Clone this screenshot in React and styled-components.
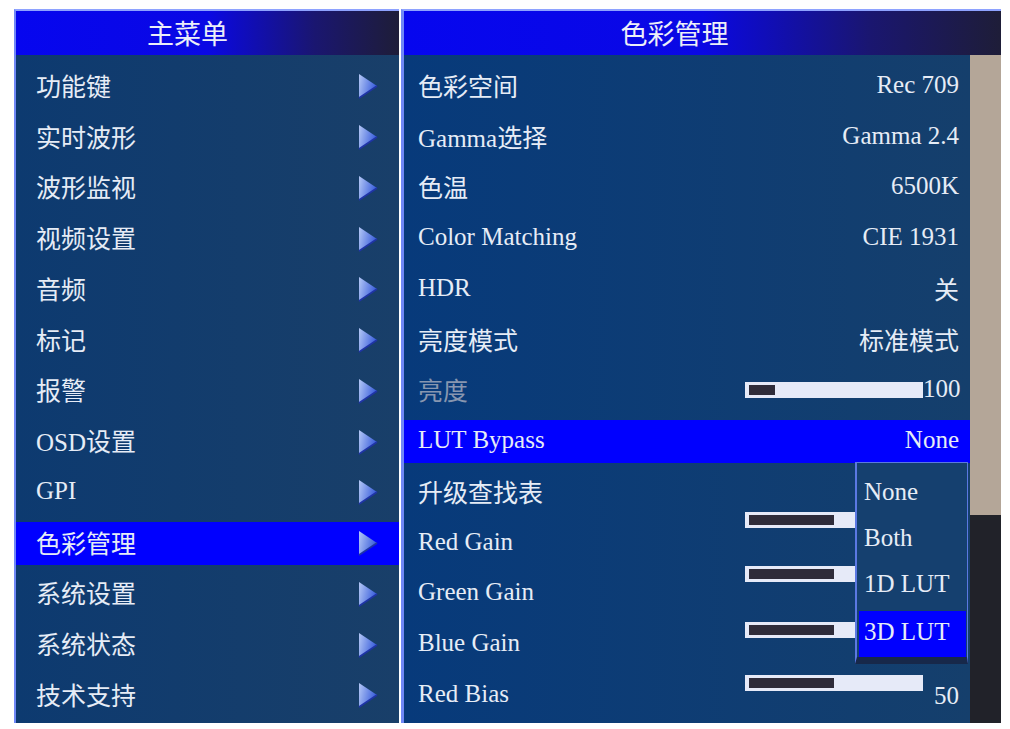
import React from 'react';
import styled, { createGlobalStyle } from 'styled-components';

const GlobalStyle = createGlobalStyle`
	body {
		margin: 0;
		background: #ffffff;
	}
`;

const FONT = `'Liberation Serif', 'Noto Sans CJK SC', serif`;

const Screen = styled.div`
	display: flex;
	align-items: flex-start;
	gap: 1px;
	padding: 9px 0 0 14px;
	width: 1010px;
	height: 729px;
	box-sizing: border-box;
	font-family: ${FONT};
	color: #e6ecf6;
`;

const Panel = styled.div`
	display: flex;
	flex-direction: column;
	width: ${props => props.$width}px;
	height: 714px;
	border-top: 2px solid #8ea2ff;
	border-left: ${props => props.$edge}px solid #7088f6;
	box-sizing: border-box;
	margin-left: ${props => props.$offset || 0}px;
`;

const Header = styled.div`
	height: 44px;
	flex: none;
	display: flex;
	align-items: center;
	justify-content: center;
	padding-right: ${props => props.$shift}px;
	padding-bottom: 2px;
	box-sizing: border-box;
	font-size: 27px;
	color: #eceef8;
	background: linear-gradient(to right, #0606ef 0%, #0a08e4 50%, #1a1670 78%, #1e1d38 100%);
`;

const MenuList = styled.div`
	flex: 1;
	display: flex;
	flex-direction: column;
	padding-top: 6px;
	background: linear-gradient(to right, #0d3a70, #193f69);
`;

const MenuRow = styled.div`
	height: 50.75px;
	flex: none;
	display: flex;
	align-items: center;
	box-sizing: border-box;
	background: ${props =>
		props.$active ? 'linear-gradient(#0000ff, #0000ff) center / 100% 43px no-repeat' : 'transparent'};
	padding: 0 21px 3px 20px;
	font-size: 25px;
`;

const Label = styled.span`
	flex: 1;
	color: ${props => (props.$dim ? '#8796b0' : '#e6ecf6')};
	white-space: nowrap;
`;

const ArrowBox = styled.span`
	display: flex;
	margin-top: 3px;
`;

const Arrow = () => (
	<ArrowBox>
		<svg width="20" height="26" viewBox="0 0 20 26">
			<defs>
				<linearGradient id="arrowFill" x1="0" y1="0" x2="1" y2="0.3">
					<stop offset="0" stopColor="#b4c8f6" />
					<stop offset="1" stopColor="#3a5edb" />
				</linearGradient>
			</defs>
			<polygon points="1,1 19,13 1,25" fill="url(#arrowFill)" />
			<polyline points="1,25 19,13" stroke="#1f34a6" strokeWidth="1.6" fill="none" />
		</svg>
	</ArrowBox>
);

const Body = styled.div`
	flex: 1;
	display: flex;
`;

const SettingsList = styled.div`
	position: relative;
	flex: 1;
	display: flex;
	flex-direction: column;
	padding-top: 6px;
	background: linear-gradient(to right, #073a7b, #153f6c);
`;

const SettingRow = styled(MenuRow)`
	padding: 0 11px 3px 14px;
`;

const Value = styled.span`
	display: flex;
	align-items: center;
	white-space: nowrap;
`;

const SliderTrack = styled.div`
	width: 178px;
	height: 16px;
	box-sizing: border-box;
	padding: 3px 4px;
	background: #e6eaf8;
	transform: translateY(${props => props.$lift || 0}px);
`;

const SliderFill = styled.div`
	height: 100%;
	background: #2f2c3a;
`;

const SliderValue = styled.span`
	width: 36px;
	text-align: right;
	transform: translateY(${props => props.$drop || 0}px);
`;

const ScrollBar = styled.div`
	width: 31px;
	display: flex;
	flex-direction: column;
	background: #212229;
`;

const ScrollThumb = styled.div`
	height: 460px;
	background: #b4a698;
`;

const Dropdown = styled.div`
	position: absolute;
	top: 407px;
	right: 2px;
	width: 113px;
	box-sizing: border-box;
	padding: 9px 1px 0 2px;
	border: 1px solid #5b78e2;
	border-left-width: 2px;
	border-bottom: 7px solid #17284a;
	background: #15406f;
`;

const DropItem = styled.div`
	height: 46px;
	display: flex;
	align-items: center;
	padding: 0 0 6px 5px;
	box-sizing: border-box;
	font-size: 25px;
	background: ${props => (props.$active ? '#0000ff' : 'transparent')};
	margin-top: ${props => (props.$active ? 1 : 0)}px;
	padding-top: ${props => (props.$active ? 2 : 0)}px;
`;

const mainMenu = [
	'功能键',
	'实时波形',
	'波形监视',
	'视频设置',
	'音频',
	'标记',
	'报警',
	'OSD设置',
	'GPI',
	'色彩管理',
	'系统设置',
	'系统状态',
	'技术支持'
];

// values of the gain rows sit under the open dropdown, so they are left out
const settings = [
	{ label: '色彩空间', value: 'Rec 709' },
	{ label: 'Gamma选择', value: 'Gamma 2.4' },
	{ label: '色温', value: '6500K' },
	{ label: 'Color Matching', value: 'CIE 1931' },
	{ label: 'HDR', value: '关' },
	{ label: '亮度模式', value: '标准模式' },
	{ label: '亮度', dim: true, slider: { fill: 26, value: '100', lift: 1 } },
	{ label: 'LUT Bypass', value: 'None', active: true },
	{ label: '升级查找表', value: '' },
	{ label: 'Red Gain', slider: { fill: 85, value: '', lift: -22 } },
	{ label: 'Green Gain', slider: { fill: 85, value: '', lift: -18 } },
	{ label: 'Blue Gain', slider: { fill: 85, value: '', lift: -13 } },
	{ label: 'Red Bias', slider: { fill: 85, value: '50', lift: -11 } }
];

const lutOptions = ['None', 'Both', '1D LUT', '3D LUT'];

function Slider({ fill, value, lift }) {
	return (
		<Value>
			<SliderTrack $lift={lift}>
				<SliderFill style={{ width: fill }} />
			</SliderTrack>
			<SliderValue $drop={lift < 0 ? 2 : 0}>{value}</SliderValue>
		</Value>
	);
}

export default function App() {
	return (
		<>
			<GlobalStyle />
			<Screen>
				<Panel $width={385} $edge={2}>
					<Header $shift={40}>主菜单</Header>
					<MenuList>
						{mainMenu.map(item => (
							<MenuRow key={item} $active={item === '色彩管理'}>
								<Label>{item}</Label>
								<Arrow />
							</MenuRow>
						))}
					</MenuList>
				</Panel>
				<Panel $width={600} $edge={3} $offset={1}>
					<Header $shift={56}>色彩管理</Header>
					<Body>
						<SettingsList>
							{settings.map(row => (
								<SettingRow key={row.label} $active={row.active}>
									<Label $dim={row.dim}>{row.label}</Label>
									{row.slider ? <Slider {...row.slider} /> : <Value>{row.value}</Value>}
								</SettingRow>
							))}
							<Dropdown>
								{lutOptions.map(opt => (
									<DropItem key={opt} $active={opt === '3D LUT'}>
										{opt}
									</DropItem>
								))}
							</Dropdown>
						</SettingsList>
						<ScrollBar>
							<ScrollThumb />
						</ScrollBar>
					</Body>
				</Panel>
			</Screen>
		</>
	);
}
